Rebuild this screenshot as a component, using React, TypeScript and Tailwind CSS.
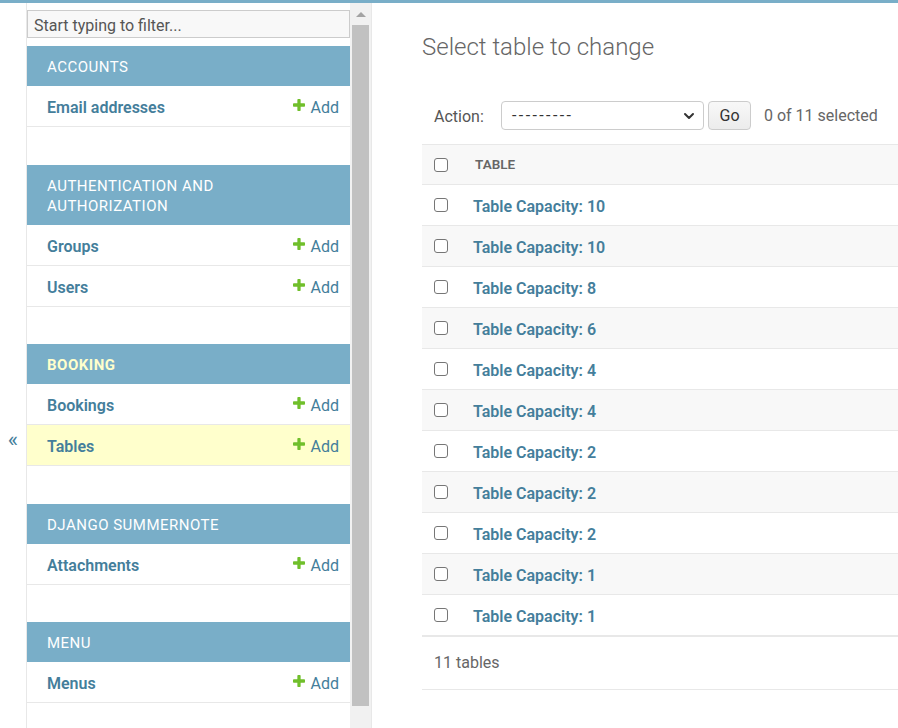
import { ChevronDown } from "lucide-react";

type NavModule = {
  title: string;
  lines?: string[];
  current?: boolean;
  models: { name: string; selected?: boolean }[];
};

const modules: NavModule[] = [
  { title: "Accounts", models: [{ name: "Email addresses" }] },
  {
    title: "Authentication and Authorization",
    lines: ["Authentication and", "Authorization"],
    models: [{ name: "Groups" }, { name: "Users" }],
  },
  {
    title: "Booking",
    current: true,
    models: [{ name: "Bookings" }, { name: "Tables", selected: true }],
  },
  { title: "Django Summernote", models: [{ name: "Attachments" }] },
  { title: "Menu", models: [{ name: "Menus" }] },
];

const capacities = [10, 10, 8, 6, 4, 4, 2, 2, 2, 1, 1];

function AddIcon() {
  return (
    <svg width="12" height="12" viewBox="192 188 1408 1408" className="mb-[6px] shrink-0">
      <path
        fill="#70bf2b"
        d="M1600 796v192q0 40-28 68t-68 28h-416v416q0 40-28 68t-68 28h-192q-40 0-68-28t-28-68v-416h-416q-40 0-68-28t-28-68v-192q0-40 28-68t68-28h416v-416q0-40 28-68t68-28h192q40 0 68 28t28 68v416h416q40 0 68 28t28 68z"
      />
    </svg>
  );
}

function Checkbox() {
  return (
    <input
      type="checkbox"
      readOnly
      className="appearance-none w-[14px] h-[14px] shrink-0 rounded-[3px] border border-[#767676] bg-white"
    />
  );
}

function Sidebar() {
  return (
    <nav className="w-[323px] shrink-0 overflow-hidden">
      <input
        type="search"
        placeholder="Start typing to filter..."
        className="mt-[7px] mb-[8px] block w-full h-[28px] px-[6px] pt-[2px] border border-[#ccc] bg-[#f8f8f8] text-[16px] text-[#333] placeholder:text-[#555] outline-none"
      />
      {modules.map((m) => (
        <div key={m.title} className="mb-[37.5px]">
          <div
            className={`bg-[#79aec8] px-5 pt-[11px] pb-[9px] leading-[20px] text-[15px] uppercase tracking-[0.5px] ${
              m.current ? "font-bold text-[#ffc]" : "text-white"
            }`}
          >
            {m.lines ? (
              <>
                {m.lines[0]}
                <br />
                {m.lines[1]}
              </>
            ) : (
              m.title
            )}
          </div>
          {m.models.map((model) => (
            <div
              key={model.name}
              className={`h-[41px] pt-[4px] border-b border-[#e8e8e8] flex items-center justify-between pl-5 pr-[11px] ${
                model.selected ? "bg-[#ffc]" : "bg-white"
              }`}
            >
              <a className="text-[16px] font-semibold text-[#447e9b]">{model.name}</a>
              <a className="flex items-center gap-[6px] text-[16px] text-[#447e9b]">
                <AddIcon />
                Add
              </a>
            </div>
          ))}
        </div>
      ))}
    </nav>
  );
}

function Scrollbar() {
  return (
    <div className="w-[22px] shrink-0 bg-[#f1f1f1] border-r border-[#e8e8e8] flex flex-col">
      <div className="h-[22px] flex items-center justify-center">
        <div className="w-0 h-0 border-x-[5px] border-x-transparent border-b-[5px] border-b-[#a3a3a3]" />
      </div>
      <div className="ml-[2px] w-[17px] h-[681px] bg-[#c1c1c1]" />
    </div>
  );
}

export default function App() {
  return (
    <div className="w-[898px] h-[728px] overflow-hidden bg-white border-t-[3px] border-[#79aec8] flex font-['Roboto',sans-serif] text-[#333]">
      <div className="w-[27px] shrink-0 border-r border-[#e8e8e8] flex justify-center pt-[427px]">
        <span className="text-[22px] leading-[20px] text-[#447e9b]">«</span>
      </div>
      <Sidebar />
      <Scrollbar />
      <main className="flex-1 overflow-hidden pl-[50px] pt-[29px]">
        <div className="w-[600px]">
          <h1 className="text-[24px] leading-[30px] font-light text-[#666] mb-[27px]">
            Select table to change
          </h1>
          <div className="flex items-start h-[55px] pt-[12px] pl-[12px] text-[16px]">
            <label className="w-[67px] h-[29px] pt-[2px] flex items-center text-[#555]">Action:</label>
            <div className="w-[203px] h-[29px] border border-[#ccc] rounded-[4px] bg-white flex items-center justify-between pl-[10px] pr-[6px]">
              <span className="text-[#333] tracking-[2.4px]">---------</span>
              <ChevronDown size={16} strokeWidth={3} className="text-[#333]" />
            </div>
            <button
              type="button"
              className="ml-[4px] w-[43px] h-[29px] pt-[1px] rounded-[4px] border border-[#ccc] bg-gradient-to-b from-[#f8f8f8] to-[#ececec] text-[#333]"
            >
              Go
            </button>
            <span className="ml-[13px] h-[29px] flex items-center text-[#666]">0 of 11 selected</span>
          </div>
          <div className="border-y border-[#e8e8e8] bg-[#f8f8f8] h-[41px] flex items-center pl-[12px]">
            <Checkbox />
            <span className="ml-[27px] text-[13.5px] font-semibold uppercase text-[#666]">Table</span>
          </div>
          {capacities.map((c, i) => (
            <div
              key={i}
              className={`h-[41px] border-b border-[#e8e8e8] flex items-center pl-[12px] ${
                i % 2 === 1 ? "bg-[#f8f8f8]" : "bg-white"
              }`}
            >
              <Checkbox />
              <a className="ml-[25px] pt-[3px] text-[16px] font-semibold text-[#447e9b]">
                Table Capacity: {c}
              </a>
            </div>
          ))}
          <div className="border-y border-[#e8e8e8] h-[54px] flex items-center pl-[12px] text-[16px] text-[#666]">
            11 tables
          </div>
        </div>
      </main>
    </div>
  );
}
